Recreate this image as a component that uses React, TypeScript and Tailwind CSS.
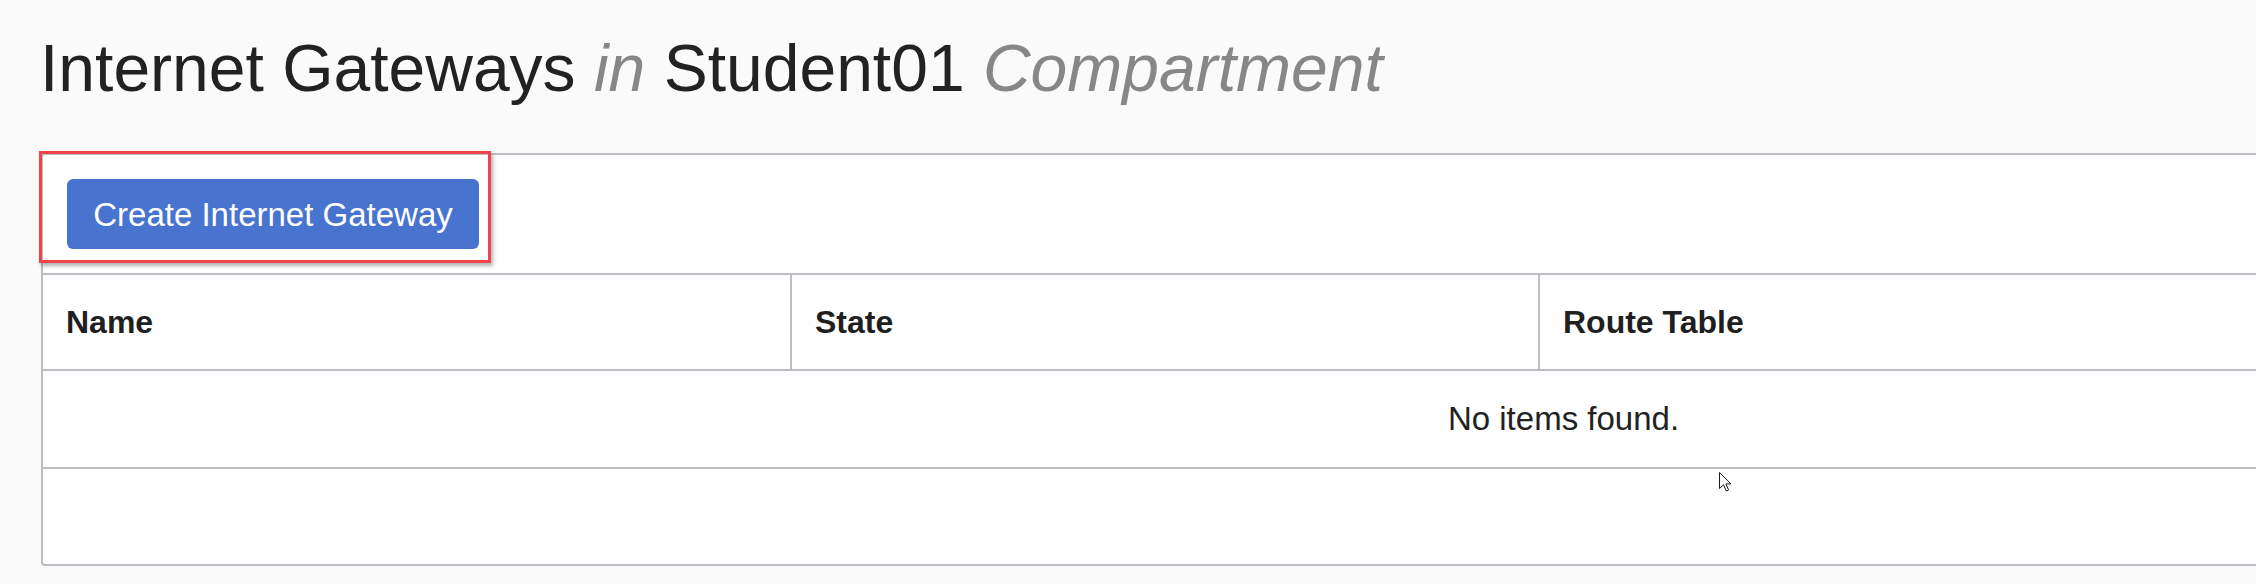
import React from "react";

// Columns of the gateways table (widths include the 2px divider)
const columns = [
  { label: "Name", width: "w-[749px]" },
  { label: "State", width: "w-[748px]" },
  { label: "Route Table", width: "w-[748px]" },
  { label: "", width: "flex-1" },
];

function Cursor() {
  return (
    <svg
      className="absolute left-[1719px] top-[472px] w-[13px] h-[20px]"
      viewBox="0 0 13 20"
      fill="none"
    >
      <path
        d="M0.5 0.5 L0.5 16.5 L4.5 12.8 L7.3 19 L9.6 18 L6.9 11.9 L12 11.9 Z"
        fill="#ffffff"
        stroke="#1a1a1a"
        strokeWidth="1"
        strokeLinejoin="miter"
      />
    </svg>
  );
}

export default function App() {
  return (
    <div
      className="relative w-[2256px] h-[584px] overflow-hidden bg-[#fafafa] text-[#222222]"
      style={{ fontFamily: '"Liberation Sans", Arial, sans-serif' }}
    >
      {/* Page title */}
      <h1 className="pl-[40px] pt-[35px] text-[66px] leading-none font-normal whitespace-nowrap">
        Internet Gateways <span className="italic text-[#878787]">in</span> Student01{" "}
        <span className="italic text-[#878787]">Compartment</span>
      </h1>

      {/* Panel */}
      <div className="mt-[52px] ml-[41px] w-[3043px] bg-white border-2 border-r-0 border-[#babdc2] rounded-l-[4px]">
        {/* Toolbar */}
        <div className="relative p-[24px]">
          <button className="flex items-center justify-center w-[412px] h-[70px] rounded-[6px] bg-[#4874cf] text-white text-[33px] leading-none">
            Create Internet Gateway
          </button>
          {/* Annotation highlight */}
          <div className="absolute -left-[4px] -top-[4px] w-[452px] h-[112px] border-[3px] border-[#f1434a] shadow-[2px_3px_4px_rgba(0,0,0,0.3)]" />
        </div>

        {/* Table */}
        <div className="border-t-2 border-[#babdc2]">
          <div className="flex h-[96px] border-b-2 border-[#babdc2]">
            {columns.map((c, i) => (
              <div
                key={i}
                className={`${c.width} flex items-center pl-[23px] text-[32px] font-bold text-[#1f1f1f] ${i < columns.length - 1 ? "border-r-2 border-[#babdc2]" : ""}`}
              >
                {c.label}
              </div>
            ))}
          </div>
          <div className="flex h-[98px] items-center justify-center border-b-2 border-[#babdc2] text-[33px]">
            No items found.
          </div>
          <div className="h-[95px]" />
        </div>
      </div>

      <Cursor />
    </div>
  );
}
